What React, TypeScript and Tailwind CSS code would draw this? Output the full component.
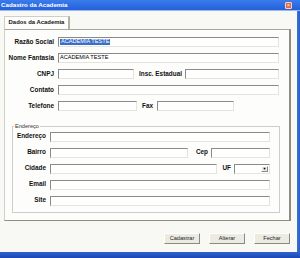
import React from 'react'

const font = { fontFamily: '"Liberation Sans", Arial, sans-serif' }

function Field({ w, children }: { w?: string; children?: React.ReactNode }) {
  return (
    <div
      className={`h-[10px] ${w ?? 'flex-1'} flex items-center overflow-hidden bg-white border-t border-l border-t-[#8a8a86] border-l-[#8a8a86] border-b border-r border-b-[#e4e3dc] border-r-[#e4e3dc] pl-[1px] text-[5.6px] leading-none text-black`}
    >
      {children}
    </div>
  )
}

function Label({ w, children }: { w: string; children: React.ReactNode }) {
  return <div className={`${w} shrink-0 text-right text-[6.4px] font-bold leading-none text-[#111]`}>{children}</div>
}

function Row({ children }: { children: React.ReactNode }) {
  return <div className="flex items-center">{children}</div>
}

function Button({ children }: { children: React.ReactNode }) {
  return (
    <div className="flex h-[11px] w-[36px] items-center justify-center border border-t-[#fff] border-l-[#fff] border-b-[#8c8a7e] border-r-[#8c8a7e] bg-[#ecebe2] text-[5.6px] leading-none text-[#222]">
      {children}
    </div>
  )
}

export default function App() {
  return (
    <div style={font} className="flex h-[258px] w-[300px] flex-col overflow-hidden bg-[#f8f8f4]">
      {/* title bar */}
      <div className="flex h-[10px] shrink-0 items-center justify-between bg-gradient-to-b from-[#3a7cec] to-[#2460da] pl-[1px] pr-[8px]">
        <span className="text-[6.2px] font-bold leading-none text-white">Cadastro da Academia</span>
        <div className="flex h-[7px] w-[7px] items-center justify-center rounded-[1px] border border-[#f3d2c4] bg-[#df6a45] text-[5px] leading-none text-white">
          ×
        </div>
      </div>
      <div className="h-px shrink-0 bg-[#9bb8ee]" />

      <div className="flex flex-1">
        <div className="flex flex-1 flex-col pl-[4px] pr-[6px] pt-[5px]">
          {/* tab */}
          <div className="flex">
            <div className="flex h-[13px] w-[66px] items-center justify-center border-l border-t border-[#cfcfc8] border-r-2 border-r-[#b3b1a6] bg-[#fdfdfb] text-[5.9px] font-bold leading-none text-[#111]">
              Dados da Academia
            </div>
          </div>

          {/* panel */}
          <div className="flex h-[192px] flex-col gap-[6px] border border-t-[#a9a79c] border-l-[#d2d1c9] border-b-[#8f8d82] border-r-2 border-r-[#8f8d82] bg-[#fdfdfc] pr-[10px] pt-[7px]">
            <Row>
              <Label w="w-[49px]">Razão Social</Label>
              <div className="w-[4px]" />
              <Field>
                <span className="bg-[#3a6fc8] px-[1px] text-white">ACADEMIA TESTE</span>
              </Field>
            </Row>
            <Row>
              <Label w="w-[49px]">Nome Fantasia</Label>
              <div className="w-[4px]" />
              <Field>ACADEMIA TESTE</Field>
            </Row>
            <Row>
              <Label w="w-[49px]">CNPJ</Label>
              <div className="w-[4px]" />
              <Field w="w-[76px]" />
              <Label w="w-[48px]">Insc. Estadual</Label>
              <div className="w-[3px]" />
              <Field />
            </Row>
            <Row>
              <Label w="w-[49px]">Contato</Label>
              <div className="w-[4px]" />
              <Field />
            </Row>
            <Row>
              <Label w="w-[49px]">Telefone</Label>
              <div className="w-[4px]" />
              <Field w="w-[79px]" />
              <Label w="w-[16px]">Fax</Label>
              <div className="w-[4px]" />
              <Field w="w-[77px]" />
            </Row>

            {/* Endereço group */}
            <fieldset className="ml-[7px] mr-[-1px] mt-[7px] flex flex-col gap-[6px] border border-[#cfcec6] pb-[6px] pl-0 pr-[9px] pt-[2px]">
              <legend className="ml-[1px] px-[1px] text-[5.6px] leading-none text-[#333]">Endereço</legend>
              <Row>
                <Label w="w-[33px]">Endereço</Label>
                <div className="w-[4px]" />
                <Field />
              </Row>
              <Row>
                <Label w="w-[33px]">Bairro</Label>
                <div className="w-[4px]" />
                <Field w="w-[138px]" />
                <Label w="w-[20px]">Cep</Label>
                <div className="w-[3px]" />
                <Field />
              </Row>
              <Row>
                <Label w="w-[33px]">Cidade</Label>
                <div className="w-[4px]" />
                <Field w="w-[167px]" />
                <Label w="w-[14px]">UF</Label>
                <div className="w-[3px]" />
                <div className="flex h-[10px] w-[36px] items-center justify-end border-t border-l border-t-[#8a8a86] border-l-[#8a8a86] border-b border-r border-b-[#e4e3dc] border-r-[#e4e3dc] bg-white p-[1px]">
                  <div className="flex h-full w-[7px] items-center justify-center border border-t-white border-l-white border-b-[#8c8a7e] border-r-[#8c8a7e] bg-[#ecebe2] text-[4px] leading-none text-black">
                    ▼
                  </div>
                </div>
                <div className="flex-1" />
              </Row>
              <Row>
                <Label w="w-[33px]">Email</Label>
                <div className="w-[4px]" />
                <Field />
              </Row>
              <Row>
                <Label w="w-[33px]">Site</Label>
                <div className="w-[4px]" />
                <Field />
              </Row>
            </fieldset>
          </div>

          {/* buttons */}
          <div className="mt-[12px] flex justify-end gap-[9px] pr-[1px]">
            <Button>Cadastrar</Button>
            <Button>Alterar</Button>
            <Button>Fechar</Button>
          </div>
        </div>
        <div className="w-[5px] shrink-0 bg-gradient-to-r from-[#3b72d9] to-[#1d4fc1]" />
      </div>
      <div className="h-[6px] shrink-0 bg-gradient-to-b from-[#2f63d0] to-[#1b47b5]" />
    </div>
  )
}
